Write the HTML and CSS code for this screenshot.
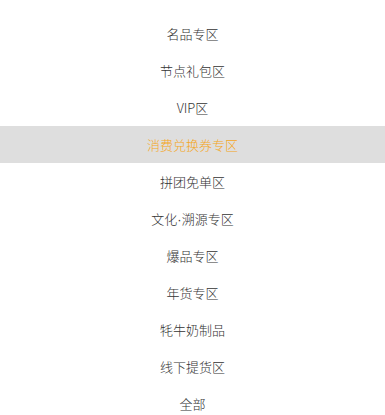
FILE: index.html
```html
<!DOCTYPE html>
<html lang="zh-CN">
<head>
  <meta charset="UTF-8">
  <title>分类</title>
  <link rel="stylesheet" href="styles.css">
</head>
<body>
<ul class="cate-list">
  <li>名品专区</li>
  <li>节点礼包区</li>
  <li>VIP区</li>
  <li class="active">消费兑换券专区</li>
  <li>拼团免单区</li>
  <li>文化<span class="dot">·</span>溯源专区</li>
  <li>爆品专区</li>
  <li>年货专区</li>
  <li>牦牛奶制品</li>
  <li>线下提货区</li>
  <li>全部</li>
</ul>
</body>
</html>
```

FILE: styles.css
```css
body {
  margin: 0;
  background: #fff;
  font-family: "Noto Sans CJK SC", "Noto Sans", sans-serif;
}
.cate-list {
  list-style: none;
  margin: 0;
  padding: 15px 0 0;
}
.cate-list li {
  height: 37px;
  line-height: 37px;
  text-align: center;
  font-size: 13px;
  font-weight: 300;
  color: #333;
}
.cate-list li.active {
  background: #dedede;
  color: #f5a623;
}
.dot {
  font-family: "Liberation Sans", sans-serif;
}
```
